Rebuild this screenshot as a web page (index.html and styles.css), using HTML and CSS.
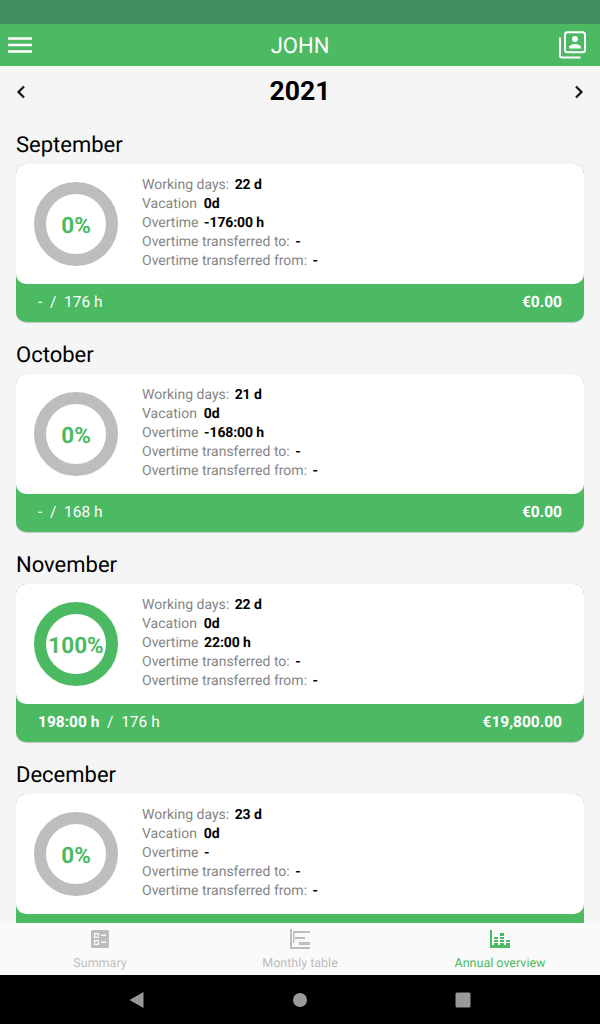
FILE: index.html
```html
<!DOCTYPE html>
<html lang="en">
<head>
<meta charset="utf-8">
<title>Annual overview</title>
<link rel="stylesheet" href="styles.css">
</head>
<body>
<div class="app">
  <div class="status"></div>
  <header class="topbar">
    <svg class="menu" viewBox="0 0 24 16" width="24" height="16"><path d="M0 1.500h24M0 8h24M0 14.500h24" stroke="#fff" stroke-width="2.400" fill="none"/></svg>
    <div class="title">JOHN</div>
    <svg class="people" viewBox="0 0 28 28" width="28" height="28"><path d="M2 6.500v18a2 2 0 0 0 2 2h18.500" fill="none" stroke="#fff" stroke-width="2"/><rect x="7" y="1.200" width="20" height="20" rx="2.500" fill="none" stroke="#fff" stroke-width="2"/><circle cx="17" cy="8" r="3" fill="#fff"/><path d="M11 17.500v-1c0-2.200 3.500-3.400 6-3.400s6 1.200 6 3.400v1z" fill="#fff"/></svg>
  </header>
  <main class="content">
    <div class="yearbar">
      <svg class="chev" viewBox="0 0 10 14" width="10" height="14"><path d="M8 1.500 2.500 7 8 12.500" fill="none" stroke="#111" stroke-width="2.200"/></svg>
      <div class="year">2021</div>
      <svg class="chev" viewBox="0 0 10 14" width="10" height="14"><path d="M2 1.500 7.500 7 2 12.500" fill="none" stroke="#111" stroke-width="2.200"/></svg>
    </div>

    <section class="month">
      <h2>September</h2>
      <div class="card">
        <div class="card-top">
          <div class="ring"><span>0%</span></div>
          <ul class="facts">
            <li>Working days:<b>22 d</b></li>
            <li>Vacation<b>0d</b></li>
            <li>Overtime<b>-176:00 h</b></li>
            <li>Overtime transferred to:<b>-</b></li>
            <li>Overtime transferred from:<b>-</b></li>
          </ul>
        </div>
        <div class="card-foot"><span>- &nbsp;/&nbsp; 176 h</span><b>€0.00</b></div>
      </div>
    </section>

    <section class="month">
      <h2>October</h2>
      <div class="card">
        <div class="card-top">
          <div class="ring"><span>0%</span></div>
          <ul class="facts">
            <li>Working days:<b>21 d</b></li>
            <li>Vacation<b>0d</b></li>
            <li>Overtime<b>-168:00 h</b></li>
            <li>Overtime transferred to:<b>-</b></li>
            <li>Overtime transferred from:<b>-</b></li>
          </ul>
        </div>
        <div class="card-foot"><span>- &nbsp;/&nbsp; 168 h</span><b>€0.00</b></div>
      </div>
    </section>

    <section class="month">
      <h2>November</h2>
      <div class="card">
        <div class="card-top">
          <div class="ring full"><span>100%</span></div>
          <ul class="facts">
            <li>Working days:<b>22 d</b></li>
            <li>Vacation<b>0d</b></li>
            <li>Overtime<b>22:00 h</b></li>
            <li>Overtime transferred to:<b>-</b></li>
            <li>Overtime transferred from:<b>-</b></li>
          </ul>
        </div>
        <div class="card-foot"><span><b>198:00 h</b> &nbsp;/&nbsp; 176 h</span><b>€19,800.00</b></div>
      </div>
    </section>

    <section class="month">
      <h2>December</h2>
      <div class="card">
        <div class="card-top">
          <div class="ring"><span>0%</span></div>
          <ul class="facts">
            <li>Working days:<b>23 d</b></li>
            <li>Vacation<b>0d</b></li>
            <li>Overtime<b>-</b></li>
            <li>Overtime transferred to:<b>-</b></li>
            <li>Overtime transferred from:<b>-</b></li>
          </ul>
        </div>
        <div class="card-foot"></div>
      </div>
    </section>
  </main>
  <nav class="tabs">
    <div class="tab">
      <svg viewBox="0 0 18 18" width="18" height="18"><path fill="#bdbdbd" fill-rule="evenodd" d="M1.500 0h15A1.500 1.500 0 0 1 18 1.500v15a1.500 1.500 0 0 1-1.500 1.500h-15A1.500 1.500 0 0 1 0 16.500v-15A1.500 1.500 0 0 1 1.500 0zM3 3v5h5V3zM4.200 4.200h2.600v2.600H4.200zM3 10v5h5v-5zM4.200 11.200h2.600v2.600H4.200zM10 4.500v1.500h5V4.500zM10 11.500V13h5v-1.500z"/></svg>
      <span>Summary</span>
    </div>
    <div class="tab">
      <svg viewBox="0 0 20 20" width="20" height="20"><path fill="#bdbdbd" d="M0 0h2v18h18v2H0zM3 2h17v2H3zM3 2h1.500v12H3zM5 8h10v2H5zM9 13h11v3H9z"/></svg>
      <span>Monthly table</span>
    </div>
    <div class="tab active">
      <svg viewBox="0 0 20 18" width="20" height="18"><path fill="#4cb963" d="M0 0h2v15h18v3H0zM4 7h4v2H4zM4 10h4v2H4zM4 13h4v2H4zM10 3h4v3h-4zM10 7h4v2h-4zM10 10h4v2h-4zM10 13h4v2h-4zM16 10h4v2h-4zM16 13h4v2h-4z"/></svg>
      <span>Annual overview</span>
    </div>
  </nav>
  <footer class="sysnav">
    <svg viewBox="0 0 16 16" width="16" height="16"><path d="M14.500 0v16L.5 8z" fill="#999"/></svg>
    <svg viewBox="0 0 16 16" width="16" height="16"><circle cx="8" cy="8" r="7" fill="#999"/></svg>
    <svg viewBox="0 0 16 16" width="16" height="16"><rect x="0.500" y="0.500" width="15" height="15" rx="1.500" fill="#999"/></svg>
  </footer>
</div>
</body>
</html>
```
FILE: styles.css
```css
* { box-sizing: border-box; }
html, body { margin: 0; padding: 0; }
body { font-family: Roboto, "Noto Sans", sans-serif; background: #f5f5f5; text-rendering: geometricPrecision; }
.app { width: 600px; height: 1024px; display: flex; flex-direction: column; overflow: hidden; }
.status { height: 24px; background: #438e60; flex: none; }
.topbar { height: 42px; flex: none; background: #4cb963; display: flex; align-items: center; justify-content: space-between; padding: 0 8px; color: #fff; position: relative; }
.title { font-size: 22px; line-height: 45px; position: absolute; top: 0; left: 0; right: 0; text-align: center; }
.menu { margin-top: -1px; }
.people { margin-top: -1px; margin-right: 6px; }
.content { flex: 1; min-height: 0; overflow: hidden; }
.yearbar { height: 52px; display: flex; align-items: center; justify-content: space-between; padding: 0 16px; }
.chev { margin-top: -1px; }
.year { font-size: 26.500px; font-weight: 700; color: #000; line-height: 52px; height: 52px; }
.month { height: 210px; display: flex; flex-direction: column; }
.month h2 { margin: 0; font-size: 22px; font-weight: 400; color: #000; line-height: 26px; height: 46px; padding: 15px 16px 0; }
.card { margin: 0 16px; height: 158px; flex: none; background: #4cb963; border-radius: 10px; box-shadow: 0 1px 1px rgba(0,0,0,.18); display: flex; flex-direction: column; }
.card-top { height: 120px; flex: none; background: #fff; border-radius: 10px; display: flex; padding: 12px 0 0 18px; }
.ring { width: 84px; height: 84px; margin-top: 6px; flex: none; border: 12px solid #bdbdbd; border-radius: 50%; display: flex; align-items: center; justify-content: center; color: #4cb963; font-size: 22.500px; font-weight: 700; white-space: nowrap; padding-top: 3px; }
.ring.full { border-color: #4cb963; }
.facts { list-style: none; margin: 0 0 0 24px; padding: 0; font-size: 14px; line-height: 19px; color: #858585; }
.facts li { white-space: nowrap; }
.facts b { color: #000; font-weight: 700; margin-left: 5.500px; letter-spacing: -.1px; }
.facts li:nth-child(2) b { margin-left: 7px; }
.card-foot { flex: 1; display: flex; align-items: center; justify-content: space-between; padding: 0 22px 2px; color: #fff; font-size: 15.500px; }
.tabs { height: 52px; flex: none; background: #fafafa; display: flex; }
.tab { flex: 1; display: flex; flex-direction: column; align-items: center; padding-top: 6px; font-size: 12.500px; color: #bdbdbd; }
.tab svg { height: 20px; }
.tab span { line-height: 14px; margin-top: 8px; }
.tab.active { color: #4cb963; }
.sysnav { height: 49px; flex: none; background: #000; display: flex; align-items: center; justify-content: center; gap: 147px; }
```
